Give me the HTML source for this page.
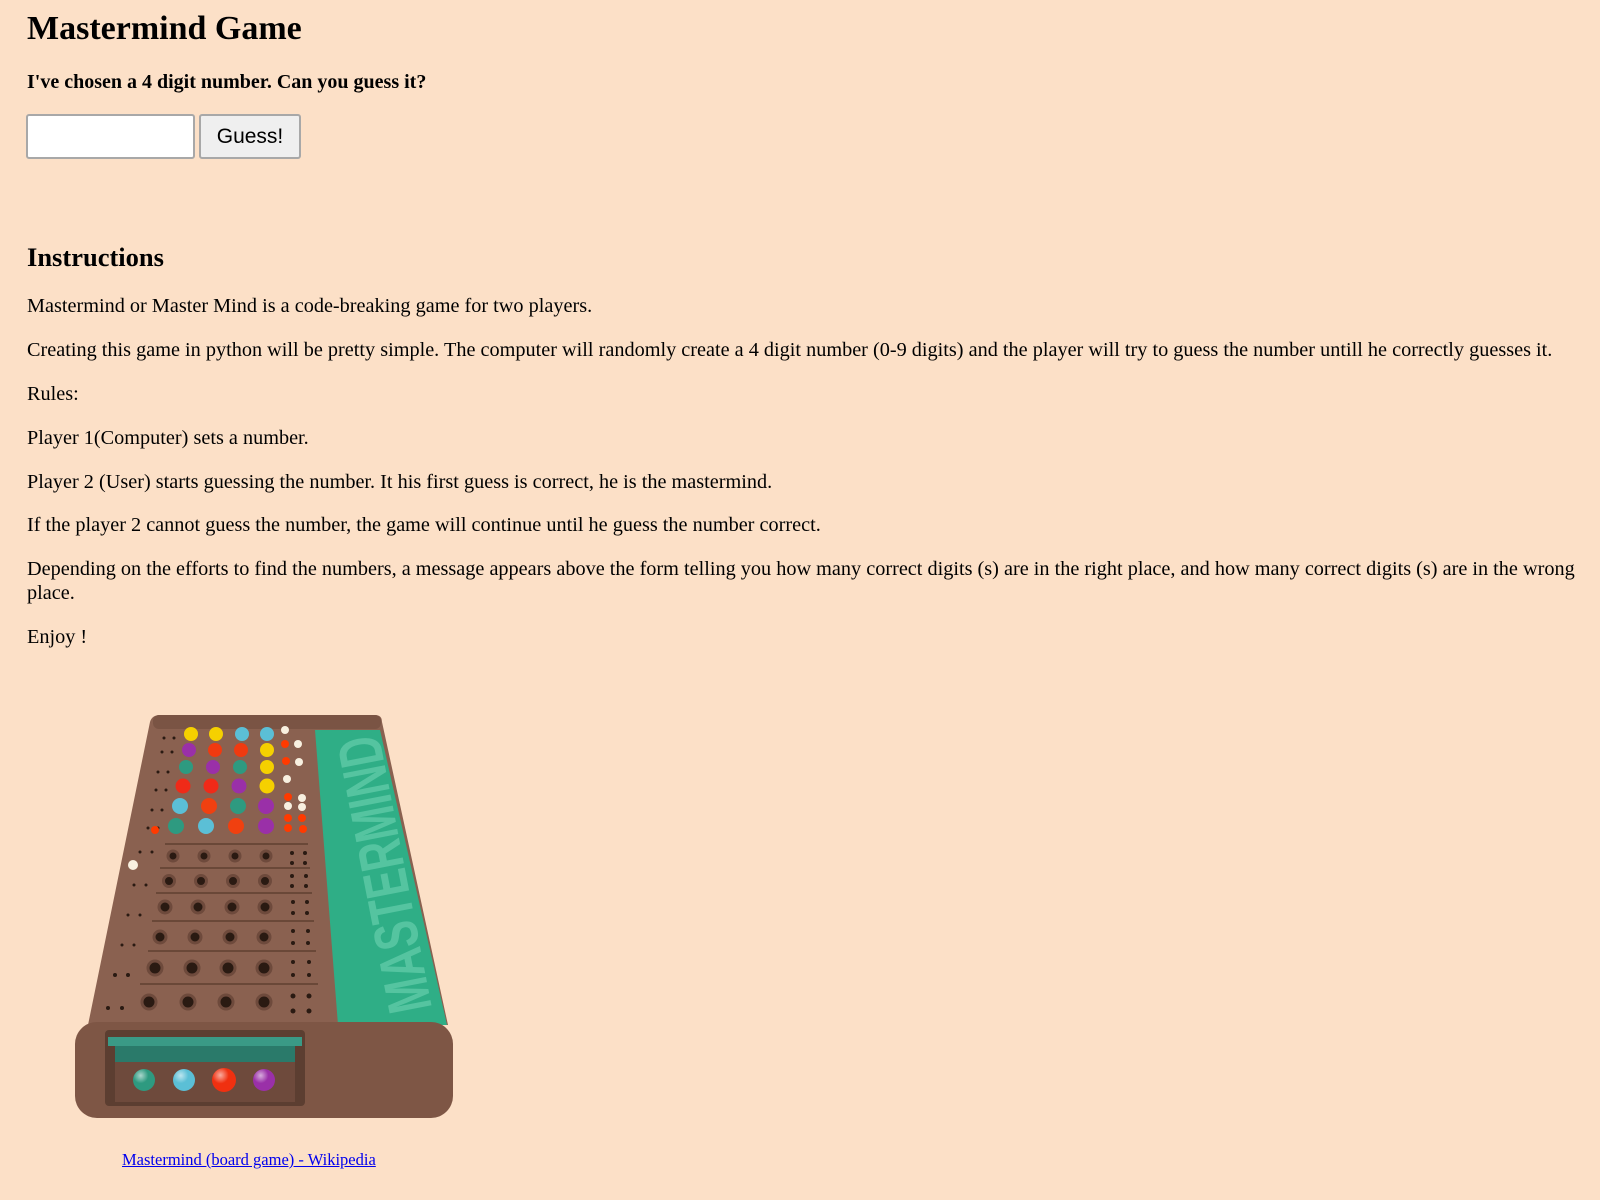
<!DOCTYPE html>
<html><head><meta charset="utf-8">
<style>
html,body{margin:0;padding:0;}
body{width:1600px;height:1200px;background:#fce0c7;font-family:"Liberation Serif",serif;color:#000;position:relative;overflow:hidden;}
.a{position:absolute;left:27px;margin:0;white-space:nowrap;}
p.a{font-size:20.25px;line-height:23px;}
h1.a{font-size:34px;font-weight:bold;line-height:40px;}
h3.a{font-size:20px;font-weight:bold;line-height:23px;}
h2.a{font-size:26.5px;font-weight:bold;line-height:30px;}
.inp{position:absolute;left:26px;top:114px;background:#fff;border:2px solid #a8a8a8;border-radius:3px;box-sizing:content-box;width:165px;height:41px;}
.btn{position:absolute;left:199px;top:114px;width:98px;height:41px;background:#efefef;border:2px solid #a8a8a8;border-radius:3px;font-family:"Liberation Sans",sans-serif;font-size:21px;line-height:41px;text-align:center;}
a{color:#0000ee;}
</style></head><body>
<h1 class="a" style="top:9px">Mastermind Game</h1>
<h3 class="a" style="top:71px">I've chosen a 4 digit number. Can you guess it?</h3>
<div class="inp"></div>
<div class="btn">Guess!</div>
<h2 class="a" style="top:242px">Instructions</h2>
<p class="a" style="top:295px">Mastermind or Master Mind is a code-breaking game for two players.</p>
<p class="a" style="top:339px">Creating this game in python will be pretty simple. The computer will randomly create a 4 digit number (0-9 digits) and the player will try to guess the number untill he correctly guesses it.</p>
<p class="a" style="top:383px">Rules:</p>
<p class="a" style="top:427px">Player 1(Computer) sets a number.</p>
<p class="a" style="top:471px">Player 2 (User) starts guessing the number. It his first guess is correct, he is the mastermind.</p>
<p class="a" style="top:514px">If the player 2 cannot guess the number, the game will continue until he guess the number correct.</p>
<p class="a" style="top:558px">Depending on the efforts to find the numbers, a message appears above the form telling you how many correct digits (s) are in the right place, and how many correct digits (s) are in the wrong</p>
<p class="a" style="top:582px">place.</p>
<p class="a" style="top:626px">Enjoy !</p>

<svg style="position:absolute;left:60px;top:700px" width="420" height="440" viewBox="0 0 420 440">
 <defs>
  <radialGradient id="g" cx="0.35" cy="0.3" r="0.7"><stop offset="0" stop-color="#fff" stop-opacity="0.6"/><stop offset="0.5" stop-color="#fff" stop-opacity="0"/></radialGradient>
  <clipPath id="strip"><path d="M255,30 L320,30 L387,325 L278,325Z"/></clipPath>
 </defs>
 <path d="M100,15 L315,15 Q322,15 322,22 L388,325 L28,325 L90,22 Q92,15 100,15Z" fill="#8a6150"/>
 <rect x="93" y="15" width="228" height="14" rx="6" fill="#7a5444"/>
 <path d="M255,30 L320,30 L387,325 L278,325Z" fill="#2fae86"/>
 <g clip-path="url(#strip)">
 <text transform="translate(372,308) rotate(-101)" font-family="Liberation Sans,sans-serif" font-weight="bold" font-size="62" fill="#55c4a0" textLength="280" lengthAdjust="spacingAndGlyphs">MASTERMIND</text>
 </g>
 <rect x="15" y="322" width="378" height="96" rx="22" fill="#7e5645"/>
 <rect x="45" y="330" width="200" height="76" rx="4" fill="#5c3e31"/>
 <rect x="48" y="337" width="194" height="9" fill="#3a9a86"/>
 <rect x="55" y="346" width="180" height="20" fill="#2a7a6a"/>
 <rect x="55" y="362" width="180" height="40" fill="#6e4a3c"/>
 <g fill="#2a1a12" stroke="#6e4a3c" stroke-width="3">
  <circle cx="113" cy="156" r="5"/><circle cx="144" cy="156" r="5"/><circle cx="175" cy="156" r="5"/><circle cx="206" cy="156" r="5"/>
  <circle cx="109" cy="181" r="5.5"/><circle cx="141" cy="181" r="5.5"/><circle cx="173" cy="181" r="5.5"/><circle cx="205" cy="181" r="5.5"/>
  <circle cx="105" cy="207" r="6"/><circle cx="138" cy="207" r="6"/><circle cx="172" cy="207" r="6"/><circle cx="205" cy="207" r="6"/>
  <circle cx="100" cy="237" r="6"/><circle cx="135" cy="237" r="6"/><circle cx="170" cy="237" r="6"/><circle cx="204" cy="237" r="6"/>
  <circle cx="95" cy="268" r="7"/><circle cx="132" cy="268" r="7"/><circle cx="168" cy="268" r="7"/><circle cx="204" cy="268" r="7"/>
  <circle cx="89" cy="302" r="7"/><circle cx="128" cy="302" r="7"/><circle cx="166" cy="302" r="7"/><circle cx="204" cy="302" r="7"/>
 </g>
 <g stroke="#6a4838" stroke-width="2">
  <line x1="105" y1="144" x2="248" y2="144"/><line x1="100" y1="168" x2="250" y2="168"/><line x1="96" y1="193" x2="252" y2="193"/><line x1="92" y1="221" x2="254" y2="221"/><line x1="88" y1="251" x2="256" y2="251"/><line x1="80" y1="284" x2="258" y2="284"/>
 </g>
 <g fill="#2a1a12">
  <circle cx="232" cy="153" r="2"/><circle cx="245" cy="153" r="2"/><circle cx="232" cy="163" r="2"/><circle cx="245" cy="163" r="2"/>
  <circle cx="232" cy="176" r="2"/><circle cx="246" cy="176" r="2"/><circle cx="232" cy="186" r="2"/><circle cx="246" cy="186" r="2"/>
  <circle cx="233" cy="202" r="2"/><circle cx="247" cy="202" r="2"/><circle cx="233" cy="213" r="2"/><circle cx="247" cy="213" r="2"/>
  <circle cx="233" cy="231" r="2"/><circle cx="248" cy="231" r="2"/><circle cx="233" cy="243" r="2"/><circle cx="248" cy="243" r="2"/>
  <circle cx="233" cy="262" r="2"/><circle cx="249" cy="262" r="2"/><circle cx="233" cy="275" r="2"/><circle cx="249" cy="275" r="2"/>
  <circle cx="233" cy="296" r="2.5"/><circle cx="249" cy="296" r="2.5"/><circle cx="233" cy="311" r="2.5"/><circle cx="249" cy="311" r="2.5"/>
  <circle cx="104" cy="38" r="1.5"/><circle cx="114" cy="38" r="1.5"/><circle cx="102" cy="52" r="1.5"/><circle cx="112" cy="52" r="1.5"/>
  <circle cx="98" cy="72" r="1.5"/><circle cx="108" cy="72" r="1.5"/><circle cx="96" cy="90" r="1.5"/><circle cx="106" cy="90" r="1.5"/>
  <circle cx="92" cy="110" r="1.5"/><circle cx="102" cy="110" r="1.5"/><circle cx="88" cy="128" r="1.5"/><circle cx="98" cy="128" r="1.5"/>
  <circle cx="80" cy="152" r="1.5"/><circle cx="92" cy="152" r="1.5"/><circle cx="74" cy="185" r="1.5"/><circle cx="86" cy="185" r="1.5"/>
  <circle cx="68" cy="215" r="1.5"/><circle cx="80" cy="215" r="1.5"/><circle cx="62" cy="245" r="1.5"/><circle cx="74" cy="245" r="1.5"/>
  <circle cx="55" cy="275" r="2"/><circle cx="68" cy="275" r="2"/><circle cx="48" cy="308" r="2"/><circle cx="62" cy="308" r="2"/>
 </g>
 <g>
  <circle cx="131" cy="34" r="7" fill="#f5d000"/><circle cx="156" cy="34" r="7" fill="#f5d000"/><circle cx="182" cy="34" r="7" fill="#5bbfd6"/><circle cx="207" cy="34" r="7" fill="#5bbfd6"/>
  <circle cx="129" cy="50" r="7" fill="#9a30a8"/><circle cx="155" cy="50" r="7" fill="#f03a10"/><circle cx="181" cy="50" r="7" fill="#f03a10"/><circle cx="207" cy="50" r="7" fill="#f5d000"/>
  <circle cx="126" cy="67" r="7" fill="#2e9a80"/><circle cx="153" cy="67" r="7" fill="#9a30a8"/><circle cx="180" cy="67" r="7" fill="#2e9a80"/><circle cx="207" cy="67" r="7" fill="#f5d000"/>
  <circle cx="123" cy="86" r="7.5" fill="#f02a18"/><circle cx="151" cy="86" r="7.5" fill="#f02a18"/><circle cx="179" cy="86" r="7.5" fill="#9a30a8"/><circle cx="207" cy="86" r="7.5" fill="#f5d000"/>
  <circle cx="120" cy="106" r="8" fill="#5bbfd6"/><circle cx="149" cy="106" r="8" fill="#f04010"/><circle cx="178" cy="106" r="8" fill="#2e9a80"/><circle cx="206" cy="106" r="8" fill="#9a30a8"/>
  <circle cx="116" cy="126" r="8" fill="#2e9a80"/><circle cx="146" cy="126" r="8" fill="#5bbfd6"/><circle cx="176" cy="126" r="8" fill="#f04010"/><circle cx="206" cy="126" r="8" fill="#9a30a8"/>
  <g fill="#f8f0e0"><circle cx="225" cy="30" r="4"/><circle cx="238" cy="44" r="4"/><circle cx="239" cy="62" r="4"/><circle cx="227" cy="79" r="4"/><circle cx="242" cy="98" r="4"/><circle cx="228" cy="106" r="4"/><circle cx="242" cy="107" r="4"/><circle cx="73" cy="165" r="5"/></g>
  <g fill="#ff3a00"><circle cx="225" cy="44" r="4"/><circle cx="226" cy="61" r="4"/><circle cx="228" cy="97" r="4"/><circle cx="228" cy="118" r="4"/><circle cx="242" cy="118" r="4"/><circle cx="228" cy="128" r="4"/><circle cx="243" cy="129" r="4"/><circle cx="95" cy="130" r="4"/></g>
  <circle cx="84" cy="380" r="11" fill="#2e9a80"/><circle cx="124" cy="380" r="11" fill="#5bbfd6"/><circle cx="164" cy="380" r="12" fill="#f03010"/><circle cx="204" cy="380" r="11" fill="#9a30a8"/>
  <g fill="url(#g)">
   <circle cx="84" cy="380" r="11"/><circle cx="124" cy="380" r="11"/><circle cx="164" cy="380" r="12"/><circle cx="204" cy="380" r="11"/>
  </g>
 </g>
</svg>
<a class="a" href="#" style="left:122px;top:1150px;font-size:16.5px;line-height:19px">Mastermind (board game) - Wikipedia</a>
</body></html>
